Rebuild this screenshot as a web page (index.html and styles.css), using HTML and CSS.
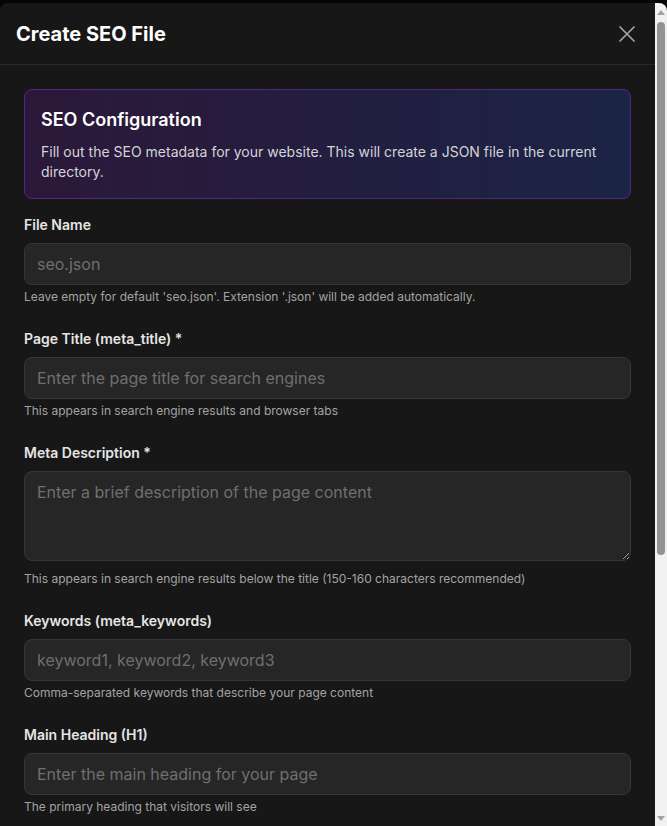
FILE: index.html
```html
<!DOCTYPE html>
<html lang="en">
<head>
<meta charset="utf-8">
<title>Create SEO File</title>
<link rel="stylesheet" href="styles.css">
</head>
<body>
<div class="modal">
  <div class="modal-main">
    <header class="modal-header">
      <h2 class="modal-title">Create SEO File</h2>
      <button class="close-btn" aria-label="Close">
        <svg width="16" height="16" viewBox="0 0 16 16"><path d="M1 1 15 15M15 1 1 15" stroke="#a3a3a3" stroke-width="1.7" fill="none" stroke-linecap="round"/></svg>
      </button>
    </header>
    <div class="modal-body">
      <div class="info-card">
        <h3 class="info-title">SEO Configuration</h3>
        <p class="info-text">Fill out the SEO metadata for your website. This will create a JSON file in the current directory.</p>
      </div>
      <div class="fields">
        <div class="field">
          <label class="label">File Name</label>
          <input class="input" placeholder="seo.json">
          <p class="help">Leave empty for default 'seo.json'. Extension '.json' will be added automatically.</p>
        </div>
        <div class="field">
          <label class="label">Page Title (meta_title) *</label>
          <input class="input" placeholder="Enter the page title for search engines">
          <p class="help">This appears in search engine results and browser tabs</p>
        </div>
        <div class="field">
          <label class="label">Meta Description *</label>
          <textarea class="input textarea" placeholder="Enter a brief description of the page content"></textarea>
          <p class="help">This appears in search engine results below the title (150-160 characters recommended)</p>
        </div>
        <div class="field">
          <label class="label">Keywords (meta_keywords)</label>
          <input class="input" placeholder="keyword1, keyword2, keyword3">
          <p class="help">Comma-separated keywords that describe your page content</p>
        </div>
        <div class="field">
          <label class="label">Main Heading (H1)</label>
          <input class="input" placeholder="Enter the main heading for your page">
          <p class="help">The primary heading that visitors will see</p>
        </div>
      </div>
    </div>
  </div>
  <div class="scrollbar" aria-hidden="true">
    <div class="sb-arrow">
      <svg width="8" height="5" viewBox="0 0 8 5"><path d="M0 5 4 0 8 5Z" fill="#a3a3a3"/></svg>
    </div>
    <div class="sb-track">
      <div class="sb-thumb"></div>
    </div>
    <div class="sb-arrow">
      <svg width="8" height="5" viewBox="0 0 8 5"><path d="M0 0 8 0 4 5Z" fill="#a3a3a3"/></svg>
    </div>
  </div>
</div>
</body>
</html>
```
FILE: styles.css
```css
* { box-sizing: border-box; }
html, body { margin: 0; padding: 0; }
body {
  background: #050505;
  font-family: Inter, "Noto Sans", sans-serif;
  overflow: hidden;
}
.modal {
  display: flex;
  margin-top: 3px;
  height: calc(100vh - 3px);
  background: #171717;
  border-radius: 8px 8px 0 0;
  overflow: hidden;
  color: #e5e5e5;
}
.modal-main {
  flex: 1;
  min-width: 0;
  overflow: hidden;
}
.scrollbar {
  width: 12px;
  flex: none;
  display: flex;
  flex-direction: column;
  background: #f1f1f1;
  padding-top: 1px;
}
.sb-arrow {
  height: 16px;
  display: flex;
  align-items: center;
  justify-content: center;
}
.sb-track {
  flex: 1;
  padding: 2px 2px 0;
}
.sb-thumb {
  height: 533px;
  background: #939393;
  border-radius: 5px;
}
.modal-header {
  display: flex;
  align-items: center;
  justify-content: space-between;
  height: 62px;
  padding: 0 16px;
  border-bottom: 1px solid #2a2a2a;
}
.modal-title {
  margin: 0;
  font-size: 20px;
  font-weight: 700;
  line-height: 28px;
  color: #ffffff;
}
.close-btn {
  display: flex;
  align-items: center;
  justify-content: center;
  width: 24px;
  height: 24px;
  padding: 0;
  margin-right: 0;
  background: none;
  border: 0;
}
.modal-body {
  padding: 24px;
}
.info-card {
  padding: 16px;
  border: 1px solid #4b2a86;
  border-radius: 8px;
  background: linear-gradient(to right, #2c1839, #1b2446);
}
.info-title {
  margin: 0;
  font-size: 18px;
  font-weight: 600;
  line-height: 28px;
  color: #ffffff;
}
.info-text {
  margin: 8px 0 0;
  font-size: 14px;
  line-height: 20px;
  color: #d4d4d8;
}
.fields {
  display: flex;
  flex-direction: column;
  gap: 24px;
  margin-top: 16px;
}
.field { display: flex; flex-direction: column; }
.label {
  font-size: 14px;
  font-weight: 600;
  line-height: 20px;
  color: #e5e5e5;
  margin-bottom: 8px;
}
.input {
  display: block;
  width: 100%;
  height: 42px;
  padding: 8px 12px;
  font-family: Inter, "Noto Sans", sans-serif;
  font-size: 16px;
  line-height: 24px;
  color: #e5e5e5;
  background: #262626;
  border: 1px solid #363636;
  border-radius: 8px;
  outline: none;
}
.input::placeholder { color: #6f6f6f; }
.textarea {
  height: 90px;
  resize: vertical;
  margin-bottom: 6px;
}
.help {
  margin: 4px 0 0;
  font-size: 12px;
  line-height: 16px;
  color: #a3a3a3;
}
```
